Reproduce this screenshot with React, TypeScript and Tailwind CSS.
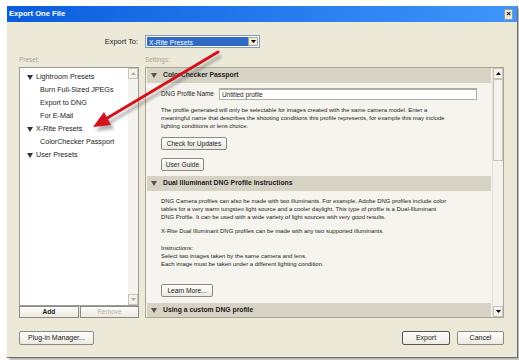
import React from 'react';

const Tri = ({ color = '#4a4a4a' }: { color?: string }) => (
  <svg width="6" height="5" viewBox="0 0 6 5" className="shrink-0">
    <path d="M0 0h6L3 5z" fill={color} />
  </svg>
);

const ArrowBox = ({ dir, color }: { dir: 'up' | 'down'; color: string }) => (
  <div className="h-[11px] flex items-center justify-center border border-[#c9c6b8] bg-[#f3f2ec]">
    <svg width="5" height="3" viewBox="0 0 5 3">
      <path d={dir === 'up' ? 'M0 3h5L2.5 0z' : 'M0 0h5L2.5 3z'} fill={color} />
    </svg>
  </div>
);

const Btn = ({ children, className }: { children: React.ReactNode; className: string }) => (
  <div
    className={`flex items-center justify-center rounded-[2px] border border-[#8d8b80] bg-gradient-to-b from-[#fdfdfb] to-[#eceae1] text-[6.6px] text-[#1c1c1c] ${className}`}
  >
    {children}
  </div>
);

const Header = ({ title, className }: { title: string; className: string }) => (
  <div className={`flex items-center gap-[6px] bg-[#d6d3c5] pl-[4px] text-[6.8px] font-bold text-[#1a1a1a] ${className}`}>
    <Tri color="#555" />
    <span className="whitespace-nowrap">{title}</span>
  </div>
);

const Lines = ({ lines, className }: { lines: string[]; className: string }) => (
  <div className={`text-[5.95px] leading-[8px] text-[#222] ${className}`}>
    {lines.map((l, i) => (
      <div key={i} className="whitespace-nowrap">
        {l}
      </div>
    ))}
  </div>
);

export default function App() {
  const presets = [
    { label: 'Lightroom Presets', group: true },
    { label: 'Burn Full-Sized JPEGs' },
    { label: 'Export to DNG' },
    { label: 'For E-Mail' },
    { label: 'X-Rite Presets', group: true },
    { label: 'ColorChecker Passport' },
    { label: 'User Presets', group: true },
  ];

  return (
    <div className="relative w-[519px] h-[360px] bg-white pl-[7px] pt-[6px] font-['Liberation_Sans',Arial,sans-serif] overflow-hidden">
      <div className="w-[511px] h-[352px] flex flex-col bg-[#ece9d8] border-r border-b border-[#6f6f6f] shadow-[2px_2px_3px_rgba(0,0,0,0.35)]">
        {/* Title bar */}
        <div className="h-[16px] flex items-center justify-between bg-gradient-to-r from-[#0a5ddb] via-[#2479ec] to-[#3f96fb] pl-[2px] pr-[4px]">
          <span className="text-[7.6px] font-bold text-white">Export One File</span>
          <div className="w-[9px] h-[11px] flex items-center justify-center bg-[#ece9d8] border border-[#9a9a9a] text-[8px] font-bold leading-none text-black">
            ×
          </div>
        </div>

        {/* Body */}
        <div className="flex-1 flex flex-col pl-[12px] pr-[13px] pt-[13px]">
          <div className="h-[13px] flex items-center pl-[84px] gap-[7px]">
            <span className="text-[7.4px] text-[#1a1a1a] w-[35px] text-right whitespace-nowrap">Export To:</span>
            <div className="w-[115px] h-[13px] flex border border-[#7f9db9] bg-white p-[1px]">
              <div className="flex-1 bg-[#316ac5] text-white text-[6.8px] leading-[11px] pl-[2px]">X-Rite Presets</div>
              <div className="w-[10px] flex items-center justify-center bg-[#ece9d8] border border-[#a9a796]">
                <svg width="5" height="3" viewBox="0 0 5 3">
                  <path d="M0 0h5L2.5 3z" fill="#000" />
                </svg>
              </div>
            </div>
          </div>

          <div className="mt-[7px] h-[10px] flex text-[6.4px] leading-[10px] text-[#a9a795]">
            <span className="w-[126px]">Preset:</span>
            <span>Settings:</span>
          </div>

          <div className="mt-[2px] h-[251px] flex gap-[6px]">
            {/* Preset list */}
            <div className="w-[120px] flex flex-col">
              <div className="h-[239px] flex border border-[#9d9c96] bg-white">
                <div className="flex-1 pt-[3px]">
                  {presets.map((p) =>
                    p.group ? (
                      <div key={p.label} className="h-[13px] flex items-center gap-[3px] pl-[7px] text-[7.2px] text-[#1c1c1c]">
                        <Tri color="#333" />
                        <span className="whitespace-nowrap">{p.label}</span>
                      </div>
                    ) : (
                      <div key={p.label} className="h-[13px] flex items-center pl-[20px] text-[7.2px] text-[#1c1c1c] whitespace-nowrap">
                        {p.label}
                      </div>
                    ),
                  )}
                </div>
                <div className="w-[10px] flex flex-col justify-between bg-[#f4f3ee]">
                  <ArrowBox dir="up" color="#b0ae9f" />
                  <ArrowBox dir="down" color="#b0ae9f" />
                </div>
              </div>
              <div className="h-[12px] flex gap-[1px]">
                <Btn className="w-[60px] h-[12px] rounded-none text-[6.4px] font-bold">Add</Btn>
                <Btn className="w-[59px] h-[12px] rounded-none text-[6.4px] !text-[#b4b2a5]">Remove</Btn>
              </div>
            </div>

            {/* Settings panel */}
            <div className="flex-1 flex border border-[#aaa795] bg-[#f6f4ee]">
              <div className="flex-1 flex flex-col overflow-hidden">
                <Header title="ColorChecker Passport" className="h-[15px] mx-[1px]" />
                <div className="pl-[15px] flex flex-col">
                  <div className="mt-[5px] h-[12px] flex items-center">
                    <span className="w-[58px] text-[6.4px] text-[#222] whitespace-nowrap">DNG Profile Name</span>
                    <div className="w-[258px] h-[12px] bg-white border border-[#b2ae9d] border-t-2 text-[6.4px] leading-[9px] pl-[2px] text-[#222]">
                      Untitled profile
                    </div>
                  </div>
                  <Lines
                    className="mt-[6px]"
                    lines={[
                      'The profile generated will only be selectable for images created with the same camera model. Enter a',
                      'meaningful name that describes the shooting conditions this profile represents, for example this may include',
                      'lighting conditions or lens choice.',
                    ]}
                  />
                  <Btn className="mt-[7px] w-[66px] h-[13px]">Check for Updates</Btn>
                  <Btn className="mt-[8px] w-[43px] h-[13px]">User Guide</Btn>
                </div>
                <Header title="Dual Illuminant DNG Profile Instructions" className="mt-[5px] h-[15px] mx-[1px]" />
                <div className="pl-[15px] flex flex-col">
                  <Lines
                    className="mt-[6px]"
                    lines={[
                      'DNG Camera profiles can also be made with two illuminants. For example, Adobe DNG profiles include color',
                      'tables for a very warm tungsten light source and a cooler daylight. This type of profile is a Dual-Illuminant',
                      'DNG Profile. It can be used with a wide variety of light sources with very good results.',
                    ]}
                  />
                  <Lines
                    className="mt-[6px]"
                    lines={['X-Rite Dual Illuminant DNG profiles can be made with any two supported illuminants.']}
                  />
                  <Lines
                    className="mt-[9px]"
                    lines={[
                      'Instructions:',
                      'Select two images taken by the same camera and lens.',
                      'Each image must be taken under a different lighting condition.',
                    ]}
                  />
                  <Btn className="mt-[16px] w-[52px] h-[13px]">Learn More...</Btn>
                </div>
                <Header title="Using a custom DNG profile" className="mt-[6px] h-[14px] mx-[1px]" />
              </div>
              <div className="w-[11px] flex flex-col bg-[#f4f3ee] border-l border-[#e2e0d6]">
                <ArrowBox dir="up" color="#000" />
                <div className="h-[82px] border border-[#c9c6b8] bg-[#f3f2ec]" />
                <div className="flex-1" />
                <ArrowBox dir="down" color="#000" />
              </div>
            </div>
          </div>

          <div className="mt-[13px] h-[14px] flex items-center">
            <Btn className="w-[75px] h-[14px] text-[7px]">Plug-in Manager...</Btn>
            <div className="flex-1" />
            <Btn className="w-[48px] h-[14px] text-[7px] border-[#55544d]">Export</Btn>
            <Btn className="ml-[7px] w-[47px] h-[14px] text-[7px]">Cancel</Btn>
          </div>
        </div>
      </div>

      {/* Red annotation arrow */}
      <svg className="absolute left-0 top-0 pointer-events-none" width="519" height="360" viewBox="0 0 519 360">
        <defs>
          <filter id="blur" x="-20%" y="-20%" width="140%" height="140%">
            <feGaussianBlur stdDeviation="1.5" />
          </filter>
        </defs>
        <g transform="translate(3 4)" opacity="0.45" filter="url(#blur)">
          <line x1="218" y1="52" x2="104" y2="120" stroke="#555" strokeWidth="3" />
          <polygon points="93,127 111,125 104,112" fill="#555" />
        </g>
        <line x1="218" y1="52" x2="104" y2="120" stroke="#d2121c" strokeWidth="3" strokeLinecap="round" />
        <polygon points="93,127 111,125 104,112" fill="#d2121c" />
      </svg>
    </div>
  );
}
